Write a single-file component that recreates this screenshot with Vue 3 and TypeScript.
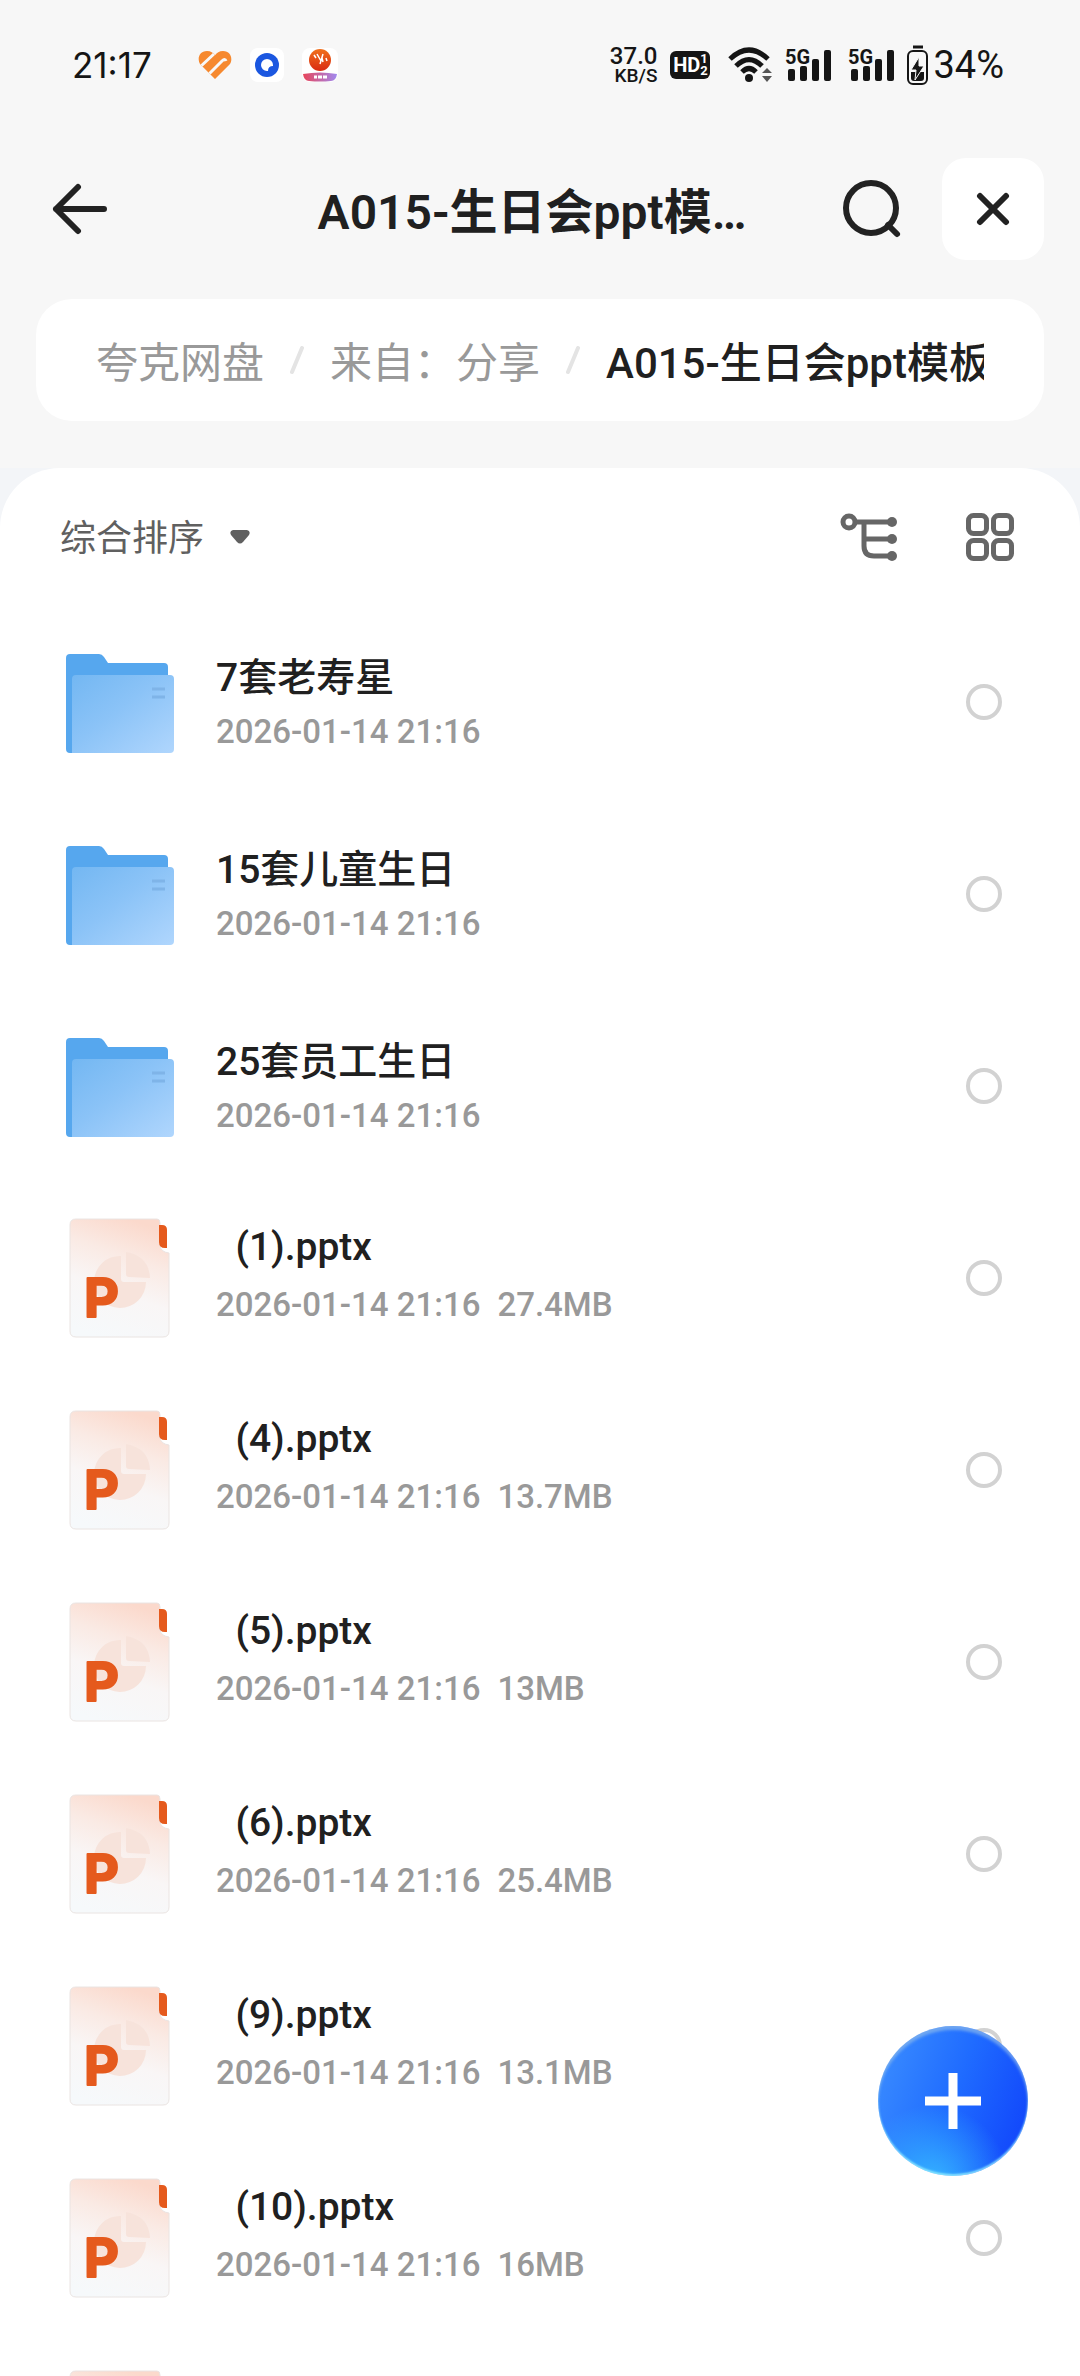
<script setup lang="ts">
import { ref } from 'vue'

interface Entry {
  kind: 'folder' | 'pptx'
  name: string
  date: string
  size?: string
}

const date = '2026-01-14 21:16'

const entries: Entry[] = [
  { kind: 'folder', name: '7套老寿星', date },
  { kind: 'folder', name: '15套儿童生日', date },
  { kind: 'folder', name: '25套员工生日', date },
  { kind: 'pptx', name: '  (1).pptx', date, size: '27.4MB' },
  { kind: 'pptx', name: '  (4).pptx', date, size: '13.7MB' },
  { kind: 'pptx', name: '  (5).pptx', date, size: '13MB' },
  { kind: 'pptx', name: '  (6).pptx', date, size: '25.4MB' },
  { kind: 'pptx', name: '  (9).pptx', date, size: '13.1MB' },
  { kind: 'pptx', name: '  (10).pptx', date, size: '16MB' },
  { kind: 'pptx', name: '', date: '' },
]

const selected = ref<number[]>([])
</script>

<template>
  <div class="screen">
    <div class="status">
      <span class="clock">21:17</span>
      <svg class="app-heart" width="34" height="30" viewBox="0 0 34 30">
        <defs>
          <clipPath id="heart">
            <path d="M17 29 2 14C-1 9 1 1 9 1c4 0 6 2 8 4 2-2 4-4 8-4 8 0 10 8 7 13Z" />
          </clipPath>
        </defs>
        <g clip-path="url(#heart)">
          <rect width="34" height="30" fill="#f6892f" />
          <path d="M2 17 17 3M10 25 24 11q3-3 4 0" fill="none" stroke="#f8f8f8" stroke-width="3" />
        </g>
      </svg>
      <svg class="app-ring" width="34" height="34" viewBox="0 0 34 34">
        <rect width="34" height="34" rx="8" fill="#fff" />
        <circle cx="17" cy="17" r="12" fill="#1b57e0" />
        <path d="M17 11a6 6 0 1 0 0 12h1q0-5 5-5v-1a6 6 0 0 0-6-6Z" fill="#fff" />
      </svg>
      <svg class="app-ball" width="36" height="34" viewBox="0 0 36 34">
        <defs>
          <linearGradient id="ribbon">
            <stop offset="0" stop-color="#e8455a" />
            <stop offset="1" stop-color="#a18af0" />
          </linearGradient>
          <linearGradient id="ball" x2="0" y2="1">
            <stop offset="0" stop-color="#f0701c" />
            <stop offset="1" stop-color="#d92a12" />
          </linearGradient>
        </defs>
        <rect width="36" height="34" rx="8" fill="#fff" />
        <circle cx="18" cy="12" r="11" fill="url(#ball)" />
        <path d="m12 7 2 3M15 6l4 7M21 6l-3 10M20 10l1 4M24 10l1 3" stroke="#fff" stroke-width="1.5" />
        <path d="M1 26q17-3 34 0-1 7-6 7-11 1-22 0-5 0-6-7Z" fill="url(#ribbon)" />
        <path d="M12 29h3m1 0h4m1 0h4" stroke="#fff" stroke-width="3" />
      </svg>
      <span class="spacer"></span>
      <span class="speed"><span>37.0</span><small>KB/S</small></span>
      <span class="hd"><span>HD</span><span class="sims"><i>1</i><i>2</i></span></span>
      <svg class="wifi" width="46" height="36" viewBox="0 0 46 36">
        <g fill="none" stroke="#151515" stroke-width="5">
          <path d="M2 12Q21-6 40 12" />
          <path d="M8 19Q21 6 34 19" />
          <path d="M14 25Q21 18 28 25" />
        </g>
        <circle cx="21" cy="31" r="4" fill="#151515" />
        <path d="m39 21 5 5H34ZM39 35l-5-6h10Z" fill="#555" />
      </svg>
      <svg v-for="n in 2" :key="n" class="signal" width="47" height="40" viewBox="0 0 47 40">
        <text x="0" y="19" font-size="20" font-weight="700" fill="#151515">5G</text>
        <g fill="#151515">
          <rect x="3" y="24" width="7" height="12" rx="2" />
          <rect x="15" y="21" width="7" height="15" rx="2" />
          <rect x="27" y="14" width="7" height="22" rx="2" />
          <rect x="39" y="5" width="7" height="31" rx="2" />
        </g>
      </svg>
      <svg class="battery" width="21" height="40" viewBox="0 0 21 40">
        <path d="M6 2h10" stroke="#151515" stroke-width="3" />
        <rect x="1" y="6" width="19" height="33" rx="5" fill="none" stroke="#151515" stroke-width="2" />
        <path d="M4 27h13v6q0 3-3 3H7q-3 0-3-3Z" fill="#151515" />
        <path d="m12 12-8 13h5l-1 10 9-14h-5Z" fill="#151515" stroke="#f8f8f8" />
      </svg>
      <span class="percent">34%</span>
    </div>

    <header class="header">
      <button class="icon-button" aria-label="返回">
        <svg width="56" height="52" viewBox="0 0 56 52">
          <path d="M26 4 4 26l22 22M4 26h48" fill="none" stroke="#222" stroke-width="6" stroke-linecap="round" stroke-linejoin="round" />
        </svg>
      </button>
      <h1 class="title">A015-生日会ppt模…</h1>
      <button class="icon-button search" aria-label="搜索">
        <svg width="60" height="60" viewBox="0 0 60 60">
          <circle cx="29" cy="29" r="25" fill="none" stroke="#222" stroke-width="6" />
          <path d="m46 46 9 9" stroke="#222" stroke-width="6" stroke-linecap="round" />
        </svg>
      </button>
      <button class="close" aria-label="关闭">
        <svg width="34" height="34" viewBox="0 0 34 34">
          <path d="m4 4 26 26M30 4 4 30" stroke="#222" stroke-width="6" stroke-linecap="round" />
        </svg>
      </button>
    </header>

    <nav class="crumbs" aria-label="路径">
      <div class="crumb-track">
        <a href="#">夸克网盘</a>
        <svg width="14" height="28" viewBox="0 0 14 28"><path d="M12 2 2 26" stroke="#e4e4e4" stroke-width="4" stroke-linecap="round" /></svg>
        <a href="#">来自：分享</a>
        <svg width="14" height="28" viewBox="0 0 14 28"><path d="M12 2 2 26" stroke="#e4e4e4" stroke-width="4" stroke-linecap="round" /></svg>
        <a href="#" class="current" aria-current="page">A015-生日会ppt模板</a>
      </div>
    </nav>

    <div class="backdrop">
      <main class="sheet">
        <div class="toolbar">
          <button class="sort" aria-haspopup="listbox">
            <span>综合排序</span>
            <svg width="20" height="14" viewBox="0 0 20 14">
              <path d="M3 0h14q4 1 2 5l-6 7q-3 3-6 0L1 5Q-1 1 3 0Z" fill="#606060" />
            </svg>
          </button>
          <button class="icon-button" aria-label="目录树">
            <svg width="58" height="48" viewBox="0 0 58 48">
              <g fill="none" stroke="#666" stroke-width="5">
                <circle cx="9" cy="9" r="6" />
                <path d="M17 9h35M24 9v24q0 10 10 10h18M24 26h28" />
              </g>
              <g fill="#666">
                <circle cx="52" cy="9" r="5" />
                <circle cx="52" cy="26" r="5" />
                <circle cx="52" cy="43" r="5" />
              </g>
            </svg>
          </button>
          <button class="icon-button" aria-label="网格视图">
            <svg width="48" height="48" viewBox="0 0 48 48">
              <g fill="none" stroke="#666" stroke-width="5">
                <rect x="2.5" y="2.5" width="18" height="18" rx="5" />
                <rect x="27.5" y="2.5" width="18" height="18" rx="5" />
                <rect x="2.5" y="27.5" width="18" height="18" rx="5" />
                <rect x="27.5" y="27.5" width="18" height="18" rx="5" />
              </g>
            </svg>
          </button>
        </div>

        <ul class="list">
          <li v-for="(entry, i) in entries" :key="i">
            <label class="row" :class="entry.kind">
              <span class="thumb">
                <svg v-if="entry.kind === 'folder'" width="108" height="100" viewBox="0 0 108 100">
                  <defs>
                    <linearGradient id="front" x2="1" y2="1">
                      <stop offset="0" stop-color="#73b7f2" />
                      <stop offset="0.45" stop-color="#8bc3f7" />
                      <stop offset="1" stop-color="#b0d6fd" />
                    </linearGradient>
                  </defs>
                  <path d="M4 0h29q3 0 5 3l4 6h56q4 0 4 4v86H4q-4 0-4-4V4q0-4 4-4Z" fill="#56a7ee" />
                  <path d="M10 21h94q4 0 4 4v70q0 4-4 4H6V25q0-4 4-4Z" fill="url(#front)" />
                  <path d="M86 35h13M86 43h13" stroke="#7fb4e8" stroke-width="3" />
                </svg>
                <svg v-else width="102" height="120" viewBox="0 0 102 120">
                  <defs>
                    <linearGradient id="page" x1="0.6" x2="0.3" y2="1">
                      <stop offset="0" stop-color="#fbd9cc" />
                      <stop offset="0.3" stop-color="#faeae4" />
                      <stop offset="0.6" stop-color="#f9f6f6" />
                      <stop offset="1" stop-color="#f6f9fb" />
                    </linearGradient>
                  </defs>
                  <path d="M7 1h81q3 0 3 4v23q1 6 9 7v78q0 6-6 6H7q-6 0-6-6V7q0-6 6-6Z" fill="url(#page)" stroke="#eae4e2" />
                  <path d="M90 7h3q5 0 5 5v18h-2q-6 0-6-6Z" fill="#e55a1d" />
                  <path d="M52 38v23q0 3 3 3h22a26 26 0 1 1-25-26Z" fill="#f7e3db" />
                  <path d="M57 34q23 4 24 26l-21-1q-3 0-3-3Z" fill="#f7e3db" />
                  <text class="letter" x="15" y="99" font-size="54" fill="#e55a1d" stroke="#e55a1d" stroke-width="2" stroke-linejoin="round">P</text>
                </svg>
              </span>
              <span class="info">
                <span class="name">{{ entry.name }}</span>
                <span class="meta"><span>{{ entry.date }}</span><span v-if="entry.size">{{ entry.size }}</span></span>
              </span>
              <input v-model="selected" type="checkbox" :value="i" :aria-label="'选择' + entry.name" />
            </label>
          </li>
        </ul>
      </main>
    </div>

    <button class="fab" aria-label="添加">
      <svg width="58" height="58" viewBox="0 0 58 58">
        <path d="M29 1v56M1 29h56" stroke="#fff" stroke-width="9" />
      </svg>
    </button>
  </div>
</template>

<style>
html,
body {
  margin: 0;
  height: 100%;
  overflow: hidden;
  background: #f7f7f7;
}

#app {
  height: 100%;
}
</style>

<style scoped>
.screen {
  position: relative;
  height: 100%;
  overflow: hidden;
  font-family: Roboto, 'Noto Sans CJK SC', sans-serif;
  color: #202020;
}

svg {
  display: block;
  flex: none;
}

button {
  margin: 0;
  padding: 0;
  border: 0;
  background: none;
  font: inherit;
  color: inherit;
}

.status {
  display: flex;
  align-items: center;
  height: 130px;
  padding: 0 76px 0 72px;
  color: #151515;
}

.clock {
  font-family: Inter, sans-serif;
  font-size: 35px;
}

.app-heart {
  margin-left: 46px;
}

.app-ring {
  margin-left: 18px;
}

.app-ball {
  margin-left: 18px;
}

.spacer {
  flex: 1;
}

.speed {
  display: flex;
  flex-direction: column;
  align-items: flex-end;
  font-size: 24px;
  font-weight: 500;
  line-height: 22px;
}

.speed small {
  font-size: 19px;
  line-height: 18px;
}

.hd {
  display: flex;
  align-items: center;
  justify-content: center;
  width: 40px;
  height: 28px;
  margin-left: 13px;
  border-radius: 6px;
  background: #151515;
  color: #fff;
  font-size: 20px;
  font-weight: 700;
  line-height: 24px;
}

.sims {
  display: flex;
  flex-direction: column;
  font-size: 13px;
  line-height: 12px;
}

.sims i {
  font-style: normal;
}

.wifi {
  margin-left: 18px;
}

.signal {
  margin-left: 16px;
}

.wifi + .signal {
  margin-left: 11px;
}

.battery {
  margin-left: 12px;
}

.percent {
  margin-left: 5px;
  font-size: 38px;
}

.header {
  display: flex;
  align-items: center;
  padding: 28px 36px 0 52px;
}

.title {
  flex: 1;
  overflow: hidden;
  margin: 0;
  padding: 8px 0 0 114px;
  text-align: center;
  white-space: nowrap;
  text-overflow: ellipsis;
  font-size: 48px;
  font-weight: 600;
  line-height: 64px;
}

.search {
  margin: 0 40px 0 0;
}

.close {
  display: grid;
  place-items: center;
  width: 102px;
  height: 102px;
  border-radius: 24px;
  background: #fff;
}

.crumbs {
  margin: 39px 36px 0;
  padding: 32px 60px;
  border-radius: 36px;
  background: #fff;
}

.crumb-track {
  display: flex;
  align-items: center;
  gap: 26px;
  overflow: hidden;
  white-space: nowrap;
  font-size: 42px;
  line-height: 50px;
}

.crumb-track a {
  padding-top: 8px;
  color: #999;
  text-decoration: none;
}

.crumb-track .current {
  color: #202020;
  font-weight: 500;
}

.backdrop {
  margin-top: 47px;
  background: #f3f5f8;
}

.sheet {
  border-radius: 60px 60px 0 0;
  background: #fff;
}

.toolbar {
  display: flex;
  align-items: center;
  gap: 68px;
  height: 138px;
  padding: 0 66px 0 60px;
}

.sort {
  display: flex;
  align-items: center;
  gap: 26px;
  margin-right: auto;
  font-size: 36px;
  color: #606060;
}

.sort span {
  padding-bottom: 4px;
}

.list {
  margin: 0;
  padding: 0;
  list-style: none;
}

.row {
  display: flex;
  align-items: center;
  gap: 36px;
  height: 192px;
  padding: 0 78px 0 60px;
}

.thumb {
  display: grid;
  place-items: center;
  width: 120px;
}

.info {
  display: flex;
  flex: 1;
  flex-direction: column;
  gap: 4px;
}

.name {
  white-space: pre;
  font-size: 39px;
  font-weight: 500;
  line-height: 52px;
}

.meta {
  display: flex;
  gap: 17px;
  font-size: 33px;
  font-weight: 500;
  line-height: 48px;
  color: #999;
}

.folder .thumb,
.folder .info {
  padding-top: 4px;
}

.pptx .info {
  gap: 8px;
  padding-bottom: 6px;
}

.letter {
  font-family: Inter, sans-serif;
  font-weight: 700;
}

.row input {
  appearance: none;
  width: 36px;
  height: 36px;
  margin: 0;
  border: 4px solid #d2d2d2;
  border-radius: 50%;
}

.row input:checked {
  border-color: #1b5cff;
  background: #1b5cff;
}

.fab {
  position: absolute;
  right: 52px;
  bottom: 200px;
  display: grid;
  place-items: center;
  width: 150px;
  height: 150px;
  border-radius: 50%;
  background:
    radial-gradient(circle at 36% 104%, #35b4ff 0, rgba(53, 180, 255, 0) 42%),
    linear-gradient(110deg, #3a8cff 5%, #1f6bff 50%, #1248fb 90%);
  box-shadow:
    inset 0 4px 3px rgba(140, 185, 235, 0.7),
    inset 0 -2px 2px rgba(150, 240, 255, 0.8);
}
</style>
